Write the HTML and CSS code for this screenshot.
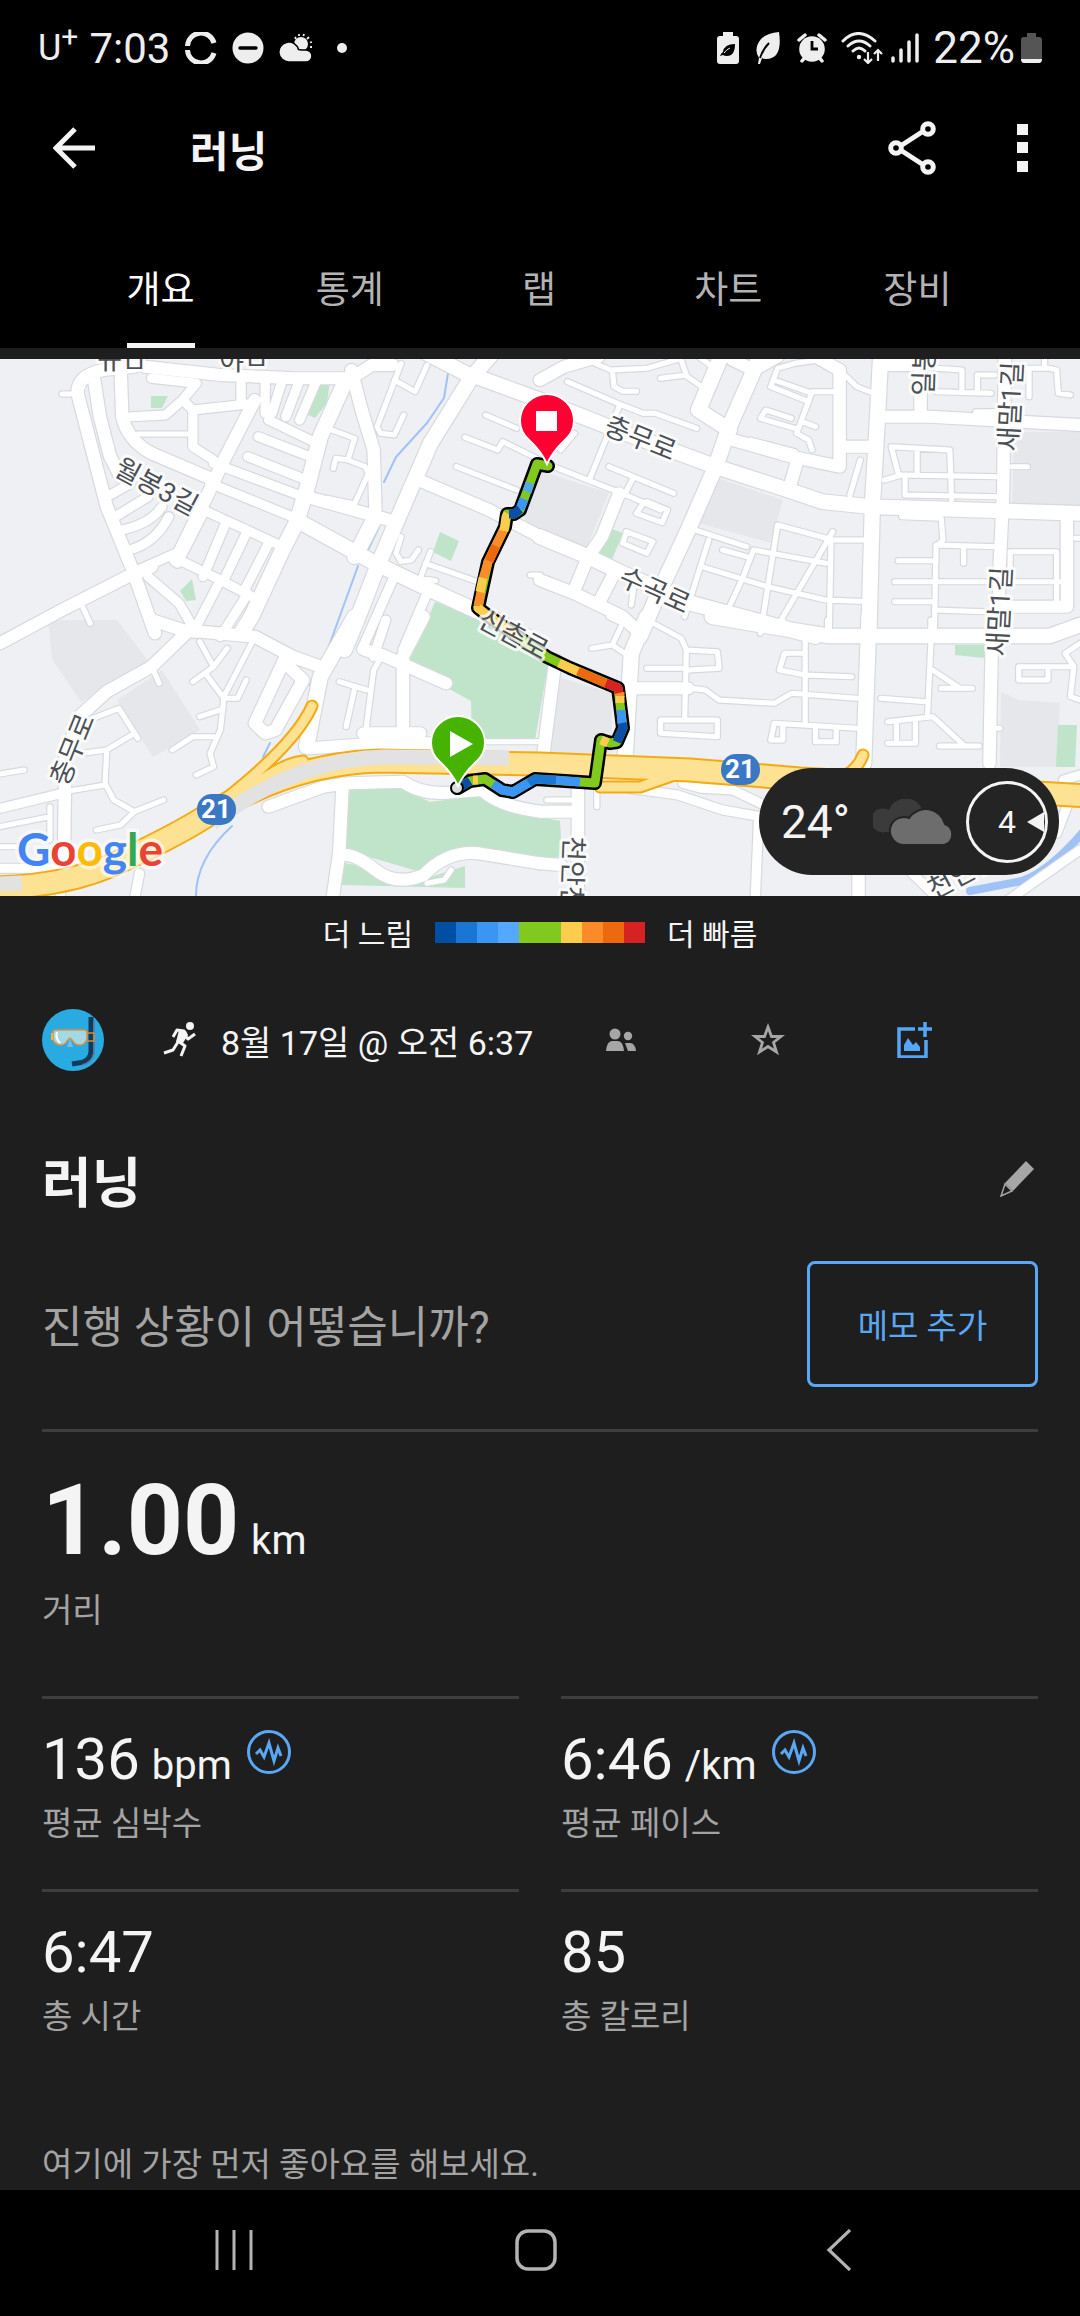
FILE: index.html
```
<!DOCTYPE html>
<html lang="ko">
<head>
    <meta charset="UTF-8">
    <meta name="viewport" content="width=device-width, initial-scale=1.0">
    <title>러닝</title>
    <link rel="stylesheet" href="styles.css">
</head>
<body>
    <div class="app">
        <header class="top">
            <!-- Status bar -->
            <div class="status-bar">
                <div class="status-group">
                    <span class="carrier">U<sup>+</sup></span>
                    <span class="clock">7:03</span>
                    <svg class="status-icon sync" viewBox="0 0 32 32" width="32" height="32"><path d="M2.500 14A13.500 13.500 0 0 1 29 11M2.500 18A13.500 13.500 0 0 0 29 21" fill="none" stroke="#eee" stroke-width="5"/></svg>
                    <svg class="status-icon dnd" viewBox="0 0 32 32" width="32" height="32"><circle cx="16" cy="16" r="15.5" fill="#eee"/><path d="M8 16H24" stroke="#000" stroke-width="3.4" stroke-linecap="round"/></svg>
                    <svg class="status-icon" viewBox="0 0 34 30" width="34" height="30"><circle cx="22" cy="11" r="7" fill="#eee"/><path d="M16 4l1 2M20 1v2M25 1l-.6 2M30 4l-2 2M33 9l-2 .5M33 14h-2" stroke="#eee" stroke-width="1.8"/><path d="M10 29a10 10 0 1 1 9.500-12.500 9 9 0 0 1 3 .5H27a6 6 0 0 1 0 12z" fill="#eee" stroke="#000" stroke-width="1.600"/></svg>
                    <svg class="status-icon more-dot" viewBox="0 0 10 10" width="10" height="10"><circle cx="5" cy="5" r="5" fill="#eee"/></svg>
                </div>
                <div class="status-group">
                    <svg viewBox="0 0 22 32" width="22" height="32"><path d="M6 0h10v4h3q3 0 3 3v22q0 3-3 3H3q-3 0-3-3V7q0-3 3-3h3z" fill="#eee"/><path d="M18 12q0 12-8 12-3 0-4-1l-3 1q1-3 3-4 1-8 12-8" fill="#000"/><path d="M7 21q3-4 6-5" stroke="#eee" fill="none"/></svg>
                    <svg class="leaf" viewBox="0 0 26 32" width="26" height="32"><path d="M24 0q4 27-13 27-3 0-4-1l-2 6H3l1-6Q-2 17 6 7q6-6 18-7" fill="#eee"/><path d="M5 26q3-9 9-15" stroke="#000" stroke-width="2" fill="none"/></svg>
                    <svg class="alarm" viewBox="0 0 30 30" width="30" height="30"><path d="M2 7l6-5M28 7l-6-5M5 28l4-5M25 28l-4-5" stroke="#eee" stroke-width="3.5" stroke-linecap="round"/><circle cx="15" cy="16" r="12.800" fill="#eee"/><path d="M15 8v8h6" stroke="#000" stroke-width="2.800" fill="none"/></svg>
                    <svg class="wifi" viewBox="0 0 42 32" width="42" height="32"><path d="M2 9q15-15 32 0M7 14q11-10 22 0M12 19q6-6 12 0" fill="none" stroke="#eee" stroke-width="3" stroke-linecap="round"/><circle cx="18" cy="25" r="2.200" fill="#eee"/><path d="M27 20v11M23 27l4 4 4-4M37 29V18M33 22l4-4 4 4" fill="none" stroke="#eee" stroke-width="2.200"/></svg>
                    <svg class="signal" viewBox="0 0 28 30" width="28" height="30"><path d="M2 25v3M10 17v11M18 9v19M26 2v26" stroke="#eee" stroke-width="3.500" stroke-linecap="round"/></svg>
                    <span class="percent">22%</span>
                    <svg class="battery" viewBox="0 0 21 30" width="21" height="30"><path d="M6 0h9v4h3q3 0 3 3v19H0V7q0-3 3-3h3z" fill="#555"/><path d="M0 26h21q0 4-3 4H3q-3 0-3-4" fill="#eee"/></svg>
                </div>
            </div>

            <!-- App bar -->
            <div class="app-bar">
                <button class="icon-btn back" aria-label="뒤로">
                    <svg viewBox="0 0 42 42" width="42" height="42"><path d="M22 2L3 21l19 19M3 21h39" fill="none" stroke="#f4f4f4" stroke-width="5"/></svg>
                </button>
                <h1>러닝</h1>
                <button class="icon-btn share" aria-label="공유">
                    <svg viewBox="0 0 48 54" width="48" height="54"><g fill="none" stroke="#f4f4f4" stroke-width="5"><path d="M14 24L34 11M14 30L34 43"/><circle cx="8" cy="27" r="5.300"/><circle cx="40" cy="8" r="5.300"/><circle cx="40" cy="46" r="5.300"/></g></svg>
                </button>
                <button class="icon-btn menu" aria-label="메뉴">
                    <svg viewBox="0 0 12 48" width="12" height="48"><path d="M0 0h11v11H0zM0 18h11v11H0zM0 37h11v11H0z" fill="#f4f4f4"/></svg>
                </button>
            </div>

            <!-- Tabs -->
            <nav class="tabs">
                <a href="#overview" class="tab active"><span>개요</span></a>
                <a href="#stats" class="tab"><span>통계</span></a>
                <a href="#laps" class="tab"><span>랩</span></a>
                <a href="#charts" class="tab"><span>차트</span></a>
                <a href="#gear" class="tab"><span>장비</span></a>
            </nav>
        </header>

        <!-- Route map -->
        <section class="map">
            <svg class="map-canvas" viewBox="0 0 1080 537" preserveAspectRatio="xMidYMid slice">
                <defs>
                    <!-- Streets, drawn tile by tile -->
                    <g id="streets">
                        <g transform="translate(0 -9) scale(.3444 .3333)">
                            <path class="w16" d="M180 132H225M400 252H550M1165 40L1095 230L1105 250L1145 255L1172 195M1145 90L1205 125L1240 45M950 235L1030 265L1010 330L975 325L968 355M1010 330L1060 350L1070 370L1030 460M950 445L1020 460M1410 195L1500 235M1350 262L1445 300L1460 275L1568 330M1325 350L1500 420M1165 560L1150 610L1165 635L1195 630L1215 600M1250 605L1220 685L1265 692M1235 640L1400 700M240 770L262 820M1540 675H1568"/>
                            <path class="w28" d="M440 85L570 100L530 150L560 180L740 160M530 150L480 195L380 200M560 180V290L620 330M700 90V160M770 90V190M820 90L790 190M870 90L830 200M920 90L870 210M780 210L920 280M750 260L900 320M720 320L890 390M620 340L880 440M610 400L860 505M590 480L800 580"/>
                            <path class="w28" d="M320 435L380 400M335 500L430 440M355 540Q440 520 470 470M375 600Q450 580 490 500M400 660L510 610M590 490L515 640M655 520L590 680M715 550L650 690M780 580L710 720M500 620L640 690L740 745M430 680L520 760L570 850M640 690L560 850M720 730L640 860M1140 690L1050 900M1240 730L1170 900"/>
                            <path class="w40" d="M390 50L300 60Q225 75 225 130L250 230L310 470L385 660L450 850M272 80L290 200L320 320L350 380M350 50L355 200Q370 270 440 310L610 385M420 50L640 75L860 85L1020 85L1080 45H1140M740 150L650 330L600 440L510 630M1020 60L1050 180L1085 300L1090 480M890 440L1130 510M1215 390L1420 480L1568 560M0 880L180 780L370 680L440 650"/>
                            <path class="w50" d="M1000 100L930 260L890 420L860 520L820 600L730 800L700 850M860 510L1090 640L1250 720L1420 800L1568 880M1240 10L1370 80L1250 280L1170 470L1100 640L1040 800L1000 900M1370 75L1568 150M1380 70L1430 10M1090 500L1030 620"/>
                        </g>
                        <g transform="translate(540 -9) scale(.3444 .3333)">
                            <path class="w16" d="M80 95L225 160L300 190H335L455 235M230 170L145 385M160 40L205 60L310 55L410 25M210 60L215 110L240 124H280M410 30L425 75L350 85M425 78L470 110M40 350L150 395L250 435L350 480M270 385L245 435M200 350L388 430M300 460L280 490L355 518L370 480L310 455M250 550L240 580L310 610L328 575L250 545M460 20L500 50M60 300L100 250"/>
                            <path class="w16" d="M880 70L920 110L970 130M810 30L740 40L690 55L670 110L780 155M850 125H790L745 250L780 270L790 300M680 90L790 130M740 235L640 205L655 180L730 205M760 215L800 230M610 270L740 305M1150 55L1225 60V125M1150 125L1310 130M1270 130V75H1320M1410 55H1480L1500 60L1505 130L1540 135M1420 60V140M1465 20V50M1265 185H1330"/>
                            <path class="w16" d="M1000 390L1050 375L1330 380M1040 370L1020 290L1190 300L1195 450M1095 300V375M1060 380V435L1330 440M1370 350H1415M1050 500L1165 505L1170 570L1150 590L1145 850M1150 585L1330 590M1230 590V640M1040 632H1150M1030 695H1510M1030 755H1145M1145 780L1290 785M1365 700V605H1500V770M1555 565H1568"/>
                            <path class="w16" d="M450 540L600 590M490 570L420 800M470 650L660 710L830 750L960 755M640 850L690 525L850 570H955M850 545L700 810M620 600L830 640M845 570L840 850M620 600L590 680L550 770M530 600L600 620M265 765L275 690M900 435L930 330"/>
                            <path class="w40" d="M0 90L70 50L170 20M560 30L620 60L690 20M560 270L730 320L870 350L870 60L800 20M745 340L725 410M870 290H970M990 200H1130L1568 225M1000 45H1080M1105 0V200M1350 0L1345 420L1335 640L1330 850M1530 500V770H1340M230 430L180 560L140 620L100 720M0 690L100 730L240 800L290 850M215 670L170 760"/>
                            <path class="w50" d="M0 150L100 190L210 235L510 350L720 420L820 455L960 470L1568 490M530 10L460 180L550 240M630 40L550 230L510 350L430 540L340 740L290 860M990 0L980 200L965 470L955 850M0 560L140 620L240 670L440 760L640 815L800 860"/>
                        </g>
                        <g transform="translate(0 261) scale(.3444 .3333)">
                            <path class="w16" d="M580 65L620 140L560 185M620 140L660 85M600 165L650 235H690L715 180M650 235L640 330L610 400L620 440L570 465M640 270L580 290M620 350H560L500 390M730 70L650 230M445 150L462 190M270 295L345 265L400 355M390 340L310 390L240 400M310 390L305 490L330 540L390 575L475 540M390 575L350 615L280 630M305 495L190 515M0 462L70 450M0 620L145 590V660M145 590V560M0 680H60"/>
                            <path class="w16" d="M985 185L1065 210M1030 205L1005 320M1110 105L1085 150L1060 350M1230 365H1568M1310 750L1290 780L1240 790"/>
                            <path class="w28" d="M0 565L180 520M405 760L390 840M175 780V840M1120 0L1085 110M0 745H200"/>
                            <path class="w40" d="M540 40L440 140L310 215L235 285L190 400L185 760M440 0L530 30L740 50L850 110L930 140M830 110L740 310L770 340L800 330L880 180L840 140M1230 -10L1170 110V350M1060 90L1110 105L1295 190M1055 340H1220M900 385L1100 370H1300"/>
                            <path class="w40" d="M780 560L940 500L1010 490L1170 485Q1230 530 1330 515L1400 510Q1450 560 1568 575M995 490L985 700L965 840M990 705Q1030 700 1090 750T1230 765Q1300 690 1390 700L1568 730"/>
                            <path class="w50" d="M1030 -10L930 170L890 380"/>
                        </g>
                        <g transform="translate(540 261) scale(.3444 .3333)">
                            <path class="w16" d="M330 10L410 55L425 90L420 300M310 145H410M425 90L515 95L520 145L430 150M440 205L480 210L520 240L680 250L730 220L920 235M350 300H515V350L350 340ZM770 60V310M770 100H710L695 150L770 165L905 170M920 325L680 310L670 360H705V315M800 325V365H860V325M150 85L210 75L235 20M210 75L260 110M200 -10L240 10"/>
                            <path class="w16" d="M835 0V40M1135 0V70M705 0V10M1135 70L1125 290M1140 150L1220 205M1165 205H1255M990 235L1120 245M1010 305L1140 290L1230 375M1160 378H1275M1035 310V370M1010 370H1090V305M1568 70L1525 100L1550 140L1540 230L1568 240M1390 140H1550M1390 145V180H1475V145M1310 325H1335M20 540H90M165 500V560"/>
                            <path class="w28" d="M260 505L400 525L530 570L640 590M415 490L470 505L560 510L660 560M635 590L625 840M1568 690L1360 840M1520 480L1568 465M1530 560L1500 640M1080 760L1140 820"/>
                            <path class="w40" d="M270 205H430M1312 60L1305 430M925 760V840M0 575H110M110 510V840M0 730L60 735M45 120L10 400"/>
                            <path class="w50" d="M310 -10L265 100L248 400M955 -10L940 430M500 -10L640 15L840 48H1480L1568 15"/>
                        </g>
                    </g>
                    <g id="highway">
                        <path class="w60" d="M-10 529Q60 528 110 507Q170 480 205 458Q290 404 380 402L540 405L690 411L800 420L1090 437"/>
                        <path class="w28h" d="M312 347Q295 385 225 440M303 402Q285 404 260 422M863 396Q856 415 835 420M600 428L640 428L680 414"/>
                    </g>
                </defs>

                <rect width="1080" height="537" fill="#eef0f3"/>
                <g fill="#e5e7eb">
                    <path d="M48 261H117L152 307L81 343L52 300ZM162 311L200 371L153 398L117 341Z"/>
                    <path d="M540 112L609 134L585 193L530 170L520 150ZM717 119L783 141L771 184L698 164ZM1014 73H1080V146H1012Z"/>
                    <path d="M561 319L612 334V394H549ZM1001 333L1019 341L1060 344L1057 408H1000Z"/>
                </g>
                <g fill="#c0e4ca">
                    <path d="M151 37H168L162 49H151ZM318 24L330 22L327 44L315 59L306 55ZM440 173L459 182L451 202L433 193ZM180 232L192 220L196 241L186 242Z"/>
                    <path d="M609 169L623 174L611 203L597 198ZM955 286H984V299L955 296ZM1058 366H1077L1075 408H1056Z"/>
                    <path d="M435 243L490 261L549 300L535 381L472 379L471 342L451 331L410 300ZM350 428L401 429L430 443L482 436L540 458L560 462L562 498L540 500L479 491L424 514L345 491ZM345 504L341 526L465 529V507L424 520Z"/>
                </g>
                <g class="river">
                    <path d="M449 8L444 39L427 64L396 98L384 123M379 168L367 193M358 207L325 298M312 320L310 327M270 384L263 398M232 467Q196 500 196 537"/>
                    <path class="wide" d="M1084 472Q1050 512 1022 522L970 532"/>
                </g>
                <use href="#streets" class="casing"/>
                <use href="#streets" class="fill"/>
                <use href="#highway" class="casing gold"/>
                <use href="#highway" class="fill gold"/>
                <path class="tunnel" d="M212 464Q295 400 385 398L509 399M0 525L22 524"/>

                <!-- Recorded route, slow to fast -->
                <path class="route-edge" d="M548 107L537 105L530 124L520 151L514 155L507 155L505 168L488 203L478 249L487 256L547 298L570 309L618 329L623 369L617 383L610 384L601 381L595 424L535 420L513 433L502 431L485 420L470 422L458 429"/>
                <path class="route-base" d="M548 107L537 105L530 124L520 151L514 155L507 155L505 168L488 203L478 249L487 256L547 298L570 309L618 329L623 369L617 383L610 384L601 381L595 424L535 420L513 433L502 431L485 420L470 422L458 429"/>
                <g class="route">
                    <path stroke="#fa8d2a" d="M504 170L488 203L483 220M481 233L478 247M620 333V338"/>
                    <path stroke="#fccc4d" d="M508 155L506 158L504 172M483 219L480 233M478 247V249L487 256L520 279M559 304L579 313M620 337V344M608 384L601 381"/>
                    <path stroke="#55a8e0" d="M530 124L527 133"/>
                    <path stroke="#3b95f2" d="M524 140L520 150M621 351L622 365M580 423L555 421M530 423L513 433L502 431L493 425"/>
                    <path stroke="#0a4ea6" d="M520 150L514 155H509M622 364L623 369L617 383M470 422L462 427"/>
                    <path stroke="#1976d2" d="M556 421L535 420L529 424"/>
                    <path stroke="#ed680f" d="M496 187L489 202M578 312L607 325"/>
                    <path stroke="#d62222" d="M606 324L618 329L619 334"/>
                    <path stroke="#fccc4d" d="M478 421H473"/>
                </g>

                <g class="place">
                    <text transform="translate(152 136) rotate(28)">월봉3길</text>
                    <text transform="translate(637 88) rotate(22)">충무로</text>
                    <text transform="translate(651 240) rotate(24)">수곡로</text>
                    <text transform="translate(509 284) rotate(28)">신촌로</text>
                    <text transform="translate(81 394) rotate(-68)">충무로</text>
                    <text transform="translate(1020 48) rotate(-87)">새말1길</text>
                    <text transform="translate(1009 253) rotate(-87)">새말1길</text>
                    <text transform="translate(934 0) rotate(-88)">일봉로</text>
                    <text transform="translate(563 514) rotate(92)">천안천</text>
                    <text transform="translate(967 523) rotate(-28)">천안천</text>
                    <text transform="translate(122 14)">ㅠㅁ</text>
                    <text transform="translate(244 11)">야ㅁ</text>
                </g>
                <g class="shield">
                    <rect x="197" y="435" width="39" height="31" rx="15"/>
                    <text x="216" y="459">21</text>
                    <rect x="721" y="395" width="39" height="31" rx="15"/>
                    <text x="740" y="419">21</text>
                </g>

                <!-- Start and finish pins -->
                <path d="M547 105Q541 92 529 81Q520 73 520 62A27 27 0 0 1 574 62Q574 73 565 81Q553 92 547 105Z" fill="#ff0032" stroke="#fff" stroke-width="2"/>
                <rect x="536" y="52" width="21" height="20" fill="#fff"/>
                <circle cx="457" cy="429" r="6" fill="#ddd" stroke="#000" stroke-width="2"/>
                <path d="M458 427Q452 414 440 403Q431 395 431 384A27 27 0 0 1 485 384Q485 395 476 403Q464 414 458 427Z" fill="#46b300" stroke="#fff" stroke-width="2"/>
                <path d="M450 372V398L473 385Z" fill="#fff"/>

                <text class="google" x="17" y="507"><tspan fill="#4285f4">G</tspan><tspan fill="#ea4335">o</tspan><tspan fill="#fbbc05">o</tspan><tspan fill="#4285f4">g</tspan><tspan fill="#34a853">l</tspan><tspan fill="#ea4335">e</tspan></text>
            </svg>

            <div class="weather">
                <span class="temp">24°</span>
                <svg class="clouds" viewBox="0 0 82 46" width="82" height="46"><path d="M13 33a12 12 0 1 1 3-22 18 18 0 0 1 32-3v25z" fill="#3b3b3b"/><path d="M30 46a14 14 0 1 1 6-27 20 20 0 0 1 36 6 11 11 0 0 1-1 21z" fill="#6d6d6d" stroke="#242424" stroke-width="2"/></svg>
                <div class="wind">
                    <span>4</span>
                    <svg class="wind-arrow" viewBox="0 0 18 20" width="18" height="20"><path d="M0 10L17 0V20Z" fill="#f4f4f4"/></svg>
                </div>
            </div>
        </section>

        <main class="content">
            <div class="legend">
                <span>더 느림</span>
                <div class="scale">
                    <i class="s1"></i><i class="s2"></i><i class="s3"></i><i class="s4"></i><i class="s5"></i><i class="s5"></i><i class="s6"></i><i class="s7"></i><i class="s8"></i><i class="s9"></i>
                </div>
                <span>더 빠름</span>
            </div>

            <div class="meta">
                <svg class="avatar" viewBox="0 0 62 62" width="62" height="62">
                    <circle cx="31" cy="31" r="31" fill="#29abe2"/>
                    <path d="M49 8V43Q48 53 36 54L30 55" fill="none" stroke="#123a5c" stroke-width="5"/>
                    <path d="M52 12V44Q50 54 40 56" fill="none" stroke="#5b7e96" stroke-width="1.500"/>
                    <path d="M45 24h7v8h-7" fill="none" stroke="#e08a2c" stroke-width="1.500"/>
                    <path d="M14 21H42Q45 21 45 24V30Q43 36 38 36Q33 36 31 32L28 29L25 32Q23 36 18 36Q12 35 11 30V24Q11 21 14 21Z" fill="#a3d9e5" stroke="#e0913c" stroke-width="1.500"/>
                    <path d="M15 23Q13 29 18 34" fill="none" stroke="#fff" stroke-width="2"/>
                    <path d="M10 24V31" stroke="#fbb03b" stroke-width="2"/>
                    <path d="M25 38L28 29L31 38Z" fill="#64c4e8"/>
                </svg>
                <svg class="runner" viewBox="0 0 34 36" width="34" height="36"><circle cx="27" cy="4" r="4" fill="#f4f4f4"/><path d="M10 15L14 8L21 9L15 19L22 24L18 34M20 11L25 17L32 12M15 20L10 28L1 31" fill="none" stroke="#f4f4f4" stroke-width="3" stroke-linejoin="round"/><path d="M16 8L23 9L25 13L20 21L13 20Z" fill="#f4f4f4"/></svg>
                <time class="date">8월 17일 @ 오전 6:37</time>
                <div class="actions">
                    <button class="action" aria-label="그룹"><svg viewBox="0 0 30 24" width="30" height="24"><g fill="#a6a6a6"><circle cx="9" cy="6" r="5.500"/><circle cx="22" cy="8" r="4.200"/><path d="M0 23Q1 13 6 13H12Q17 13 18 23ZM19 15H24Q29 15 30 23H22Z"/></g></svg></button>
                    <button class="action" aria-label="즐겨찾기"><svg viewBox="0 0 34 34" width="34" height="34"><path d="M17 4L20.500 13.500H30L22.500 19.500L25.500 29L17 23.500L8.500 29L11.500 19.500L4 13.500H13.500Z" fill="none" stroke="#a6a6a6" stroke-width="2.800"/></svg></button>
                    <button class="action" aria-label="사진 추가"><svg viewBox="0 0 36 36" width="36" height="36"><path d="M18 7H2V35H29V18M28 0V15M21 7H35" fill="none" stroke="#55a6f9" stroke-width="3.500"/><path d="M7 29V23L11 16L16 23L19 20L23 25V29Z" fill="#55a6f9"/></svg></button>
                </div>
            </div>

            <div class="title-row">
                <h2>러닝</h2>
                <button class="icon-btn" aria-label="이름 수정"><svg viewBox="0 0 38 36" width="38" height="36"><path d="M26 0L34 8L13 30L5 22Z" fill="#a6a6a6"/><path d="M5 23L1 35L12 30Z" fill="none" stroke="#a6a6a6" stroke-width="1.500"/></svg></button>
            </div>

            <div class="memo-row">
                <p>진행 상황이 어떻습니까?</p>
                <button class="memo-btn">메모 추가</button>
            </div>

            <!-- Stats -->
            <div class="stats">
                <div class="stat hero">
                    <div class="value">1.00 <small>km</small></div>
                    <div class="label">거리</div>
                </div>
                <div class="stat">
                    <div class="value">136 <small>bpm</small>
                        <svg class="pulse" viewBox="0 0 46 46" width="46" height="46"><circle cx="23" cy="23" r="20.500"/><path d="M10 25L14 21L18 28L23 14L28 32L32 19L35 27"/></svg>
                    </div>
                    <div class="label">평균 심박수</div>
                </div>
                <div class="stat">
                    <div class="value">6:46 <small>/km</small>
                        <svg class="pulse" viewBox="0 0 46 46" width="46" height="46"><circle cx="23" cy="23" r="20.500"/><path d="M10 25L14 21L18 28L23 14L28 32L32 19L35 27"/></svg>
                    </div>
                    <div class="label">평균 페이스</div>
                </div>
                <div class="stat">
                    <div class="value">6:47</div>
                    <div class="label">총 시간</div>
                </div>
                <div class="stat">
                    <div class="value">85</div>
                    <div class="label">총 칼로리</div>
                </div>
            </div>

            <p class="likes">여기에 가장 먼저 좋아요를 해보세요.</p>
        </main>

        <!-- System navigation -->
        <nav class="system-nav">
            <button aria-label="최근 앱"><svg viewBox="0 0 38 40" width="38" height="40"><path d="M2 0V40M19 0V40M36 0V40" stroke="#b3b3b3" stroke-width="3"/></svg></button>
            <button aria-label="홈"><svg viewBox="0 0 42 42" width="42" height="42"><rect x="2" y="2" width="38" height="38" rx="11" fill="none" stroke="#b3b3b3" stroke-width="3.500"/></svg></button>
            <button aria-label="뒤로"><svg viewBox="0 0 25 42" width="25" height="42"><path d="M24 1L3 21L24 41" fill="none" stroke="#b3b3b3" stroke-width="3.200"/></svg></button>
        </nav>
    </div>
</body>
</html>
```
FILE: styles.css
```
* {
    margin: 0;
    padding: 0;
    box-sizing: border-box;
}

body {
    font-family: Roboto, "Noto Sans CJK KR", sans-serif;
    background: #1e1e1e;
    color: #f4f4f4;
}

button {
    background: none;
    border: none;
    color: inherit;
    font-family: inherit;
    cursor: pointer;
}

svg {
    display: block;
    flex-shrink: 0;
}

.app {
    min-height: 100vh;
    display: flex;
    flex-direction: column;
}

.top {
    background: #000;
}

/* status bar */
.status-bar {
    height: 96px;
    padding: 0 38px;
    display: flex;
    align-items: center;
    justify-content: space-between;
    color: #eee;
    font-size: 42px;
}

.status-group {
    display: flex;
    align-items: center;
}

.carrier {
    font-size: 36px;
    line-height: 48px;
}

.carrier sup {
    font-size: 30px;
    line-height: 0;
}

.clock {
    margin-left: 11px;
}

.status-icon {
    margin-left: 15px;
}

.more-dot {
    margin-left: 24px;
}

.leaf,
.alarm {
    margin-left: 16px;
}

.wifi {
    margin-left: 14px;
}

.signal {
    margin-left: 8px;
}

.percent {
    margin-left: 14px;
    font-size: 44px;
}

.battery {
    margin-left: 6px;
}

/* app bar */
.app-bar {
    height: 104px;
    padding: 0 51px 0 53px;
    display: flex;
    align-items: center;
}

.icon-btn {
    display: flex;
}

.app-bar h1 {
    flex: 1;
    margin-left: 95px;
    font-size: 42px;
    font-weight: 700;
}

.menu {
    margin-left: 81px;
}

/* tabs */
.tabs {
    height: 148px;
    padding: 0 68px 0 66px;
    display: flex;
}

.tab {
    flex: 1;
    display: flex;
    justify-content: center;
    align-items: flex-end;
    color: #b3b3b3;
    font-size: 37px;
    line-height: 48px;
    text-decoration: none;
}

.tab span {
    padding-bottom: 28px;
    border-bottom: 5px solid transparent;
}

.tab.active {
    color: #fff;
}

.tab.active span {
    border-color: #f4f4f4;
}

/* map */
.map {
    position: relative;
    margin-top: 11px;
}

.map-canvas {
    width: 100%;
    height: 537px;
}

.map-canvas use,
.route,
.route-base,
.route-edge,
.river,
.tunnel {
    fill: none;
    stroke-linejoin: round;
    stroke-linecap: round;
}

.casing {
    --edge: 7px;
    stroke: #d6dade;
}

.fill {
    --edge: 0px;
    stroke: #fff;
}

.casing.gold {
    --edge: 4px;
    stroke: #f4ab13;
}

.fill.gold {
    stroke: #fde293;
}

.w16 { stroke-width: calc(15px + var(--edge)); }
.w28 { stroke-width: calc(27px + var(--edge)); }
.w40 { stroke-width: calc(36px + var(--edge)); }
.w50 { stroke-width: calc(44px + var(--edge)); }
.w60 { stroke-width: calc(21px + var(--edge)); }
.w28h { stroke-width: calc(9px + var(--edge)); }

.tunnel {
    stroke: #e2e2e2;
    stroke-width: 15px;
    stroke-linecap: butt;
}

.river {
    stroke: #9fc2f7;
    stroke-width: 2px;
}

.river .wide {
    stroke-width: 8px;
}

.route-edge {
    stroke: #000;
    stroke-width: 14px;
}

.route-base {
    stroke: #82c91e;
    stroke-width: 9px;
}

.route {
    stroke-width: 9px;
    stroke-linecap: butt;
}

.place text {
    font-size: 27px;
    fill: #4c5055;
    stroke: #fff;
    stroke-opacity: 0.8;
    stroke-width: 6px;
    stroke-linejoin: round;
    paint-order: stroke;
    text-anchor: middle;
}

.shield rect {
    fill: #3b78c4;
}

.shield text {
    fill: #fff;
    font-size: 26px;
    font-weight: 700;
    text-anchor: middle;
}

.google {
    font-family: Lato, sans-serif;
    font-size: 46px;
    font-weight: 700;
    stroke: #fff;
    stroke-opacity: 0.6;
    stroke-width: 7px;
    paint-order: stroke;
}

.weather {
    position: absolute;
    right: 21px;
    bottom: 21px;
    width: 300px;
    height: 107px;
    padding: 0 11px 0 22px;
    border-radius: 54px;
    background: #242424;
    display: flex;
    align-items: center;
    justify-content: space-between;
}

.temp {
    font-size: 46px;
}

.wind {
    position: relative;
    width: 82px;
    height: 82px;
    margin-left: -12px;
    border: 3px solid #f4f4f4;
    border-radius: 50%;
    display: flex;
    align-items: center;
    justify-content: center;
    font-size: 32px;
}

.wind-arrow {
    position: absolute;
    right: 0;
}

/* content */
.content {
    flex: 1;
    padding: 0 42px;
}

.legend {
    height: 72px;
    display: flex;
    align-items: center;
    justify-content: center;
    gap: 22px;
    font-size: 30px;
}

.scale {
    display: flex;
}

.scale i {
    width: 21px;
    height: 21px;
}

.s1 { background: #004fa3; }
.s2 { background: #1976d2; }
.s3 { background: #3b95f2; }
.s4 { background: #55a8ff; }
.s5 { background: #82c91e; }
.s6 { background: #fccc4d; }
.s7 { background: #fb8b28; }
.s8 { background: #ed680f; }
.s9 { background: #d62222; }

.meta {
    height: 144px;
    display: flex;
    align-items: center;
}

.runner {
    margin-left: 59px;
}

.date {
    flex: 1;
    margin-left: 24px;
    font-size: 34px;
    white-space: nowrap;
}

.actions {
    display: flex;
    margin-right: 50px;
}

.action {
    width: 147px;
    display: flex;
    align-items: center;
    justify-content: center;
}

.title-row {
    height: 142px;
    padding-bottom: 8px;
    display: flex;
    align-items: center;
    justify-content: space-between;
}

.title-row h2 {
    font-size: 54px;
    font-weight: 700;
}

.memo-row {
    height: 140px;
    margin-bottom: 35px;
    display: flex;
    align-items: center;
    justify-content: space-between;
}

.memo-row p {
    color: #a3a3a3;
    font-size: 44px;
}

.memo-btn {
    width: 231px;
    height: 126px;
    border: 3px solid #5aa7f5;
    border-radius: 8px;
    color: #5aa7f5;
    font-size: 33px;
}

/* stats */
.stats {
    display: grid;
    grid-template-columns: 1fr 1fr;
    column-gap: 42px;
}

.stat {
    height: 193px;
    padding-top: 24px;
    border-top: 3px solid #3e3e3e;
}

.stat.hero {
    grid-column: 1 / -1;
    height: 267px;
    padding-top: 44px;
}

.value {
    height: 77px;
    display: flex;
    align-items: baseline;
    gap: 12px;
    font-size: 58px;
    line-height: 72px;
}

.value small {
    font-size: 40px;
}

.hero .value {
    height: 111px;
    font-size: 98px;
    font-weight: 700;
    line-height: 90px;
}

.hero .value small {
    font-weight: 400;
}

.label {
    color: #a3a3a3;
    font-size: 33px;
    line-height: 48px;
}

.pulse {
    align-self: flex-start;
    margin: 6px 0 0 2px;
    fill: none;
    stroke: #5aa7f5;
    stroke-width: 3;
}

.likes {
    margin-top: 59px;
    color: #a3a3a3;
    font-size: 33px;
    line-height: 48px;
}

/* system navigation */
.system-nav {
    height: 126px;
    padding: 0 91px 6px 83px;
    background: #000;
    display: flex;
}

.system-nav button {
    flex: 1;
    display: flex;
    align-items: center;
    justify-content: center;
}
```
